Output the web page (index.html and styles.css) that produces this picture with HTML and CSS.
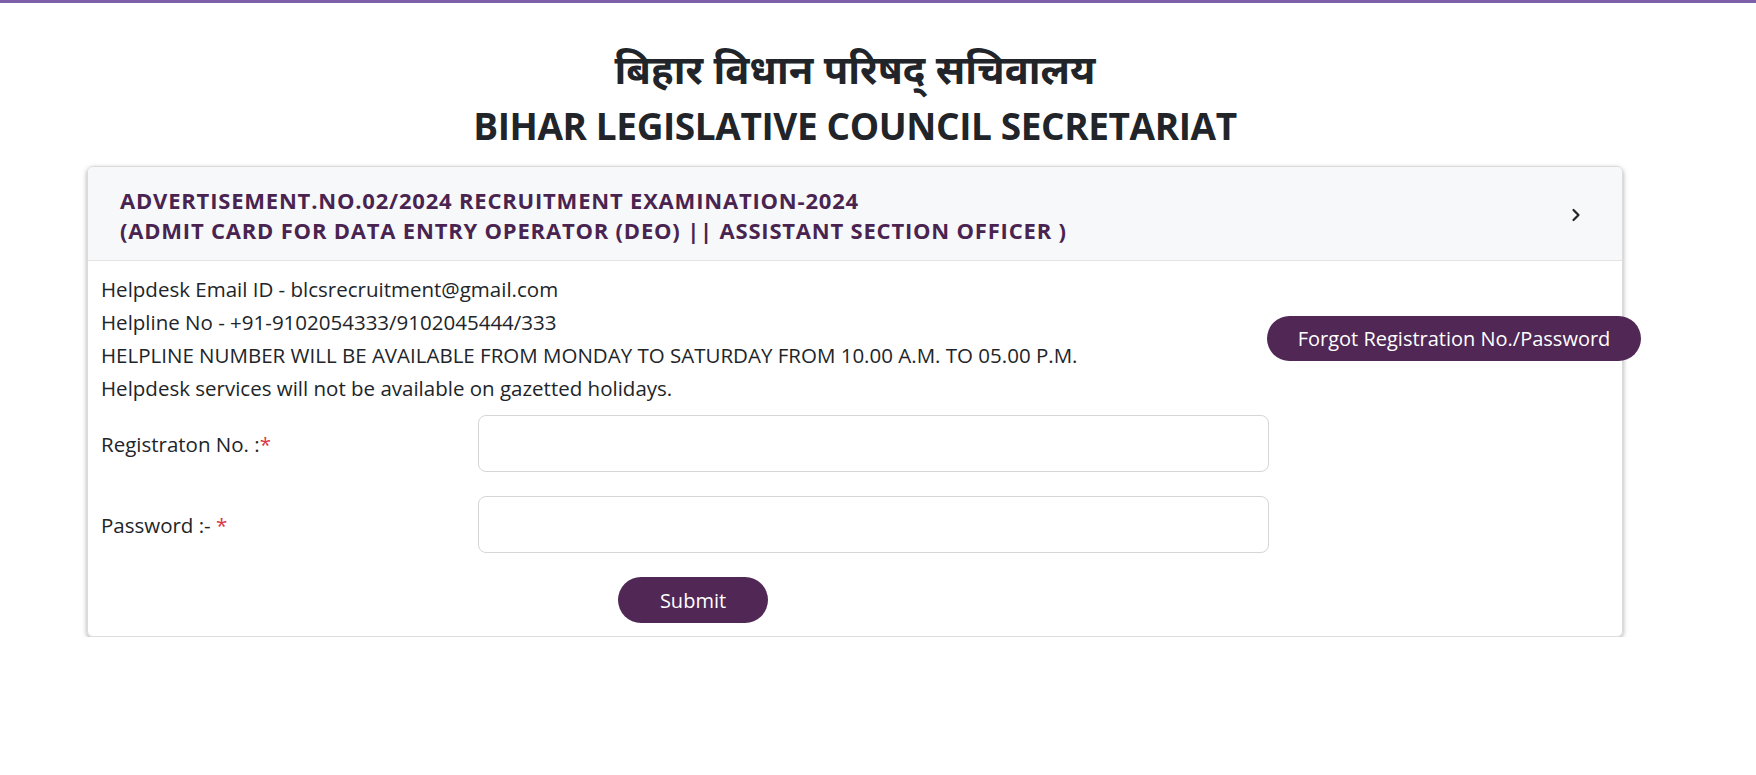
FILE: index.html
```html
<!DOCTYPE html>
<html lang="en">
<head>
    <meta charset="UTF-8">
    <meta name="viewport" content="width=device-width, initial-scale=1.0">
    <title>Bihar Legislative Council Secretariat - Admit Card</title>
    <link rel="stylesheet" href="styles.css">
</head>
<body>

    <div class="top-bar"></div>

    <div class="container">
        <div class="page-title">
            <h1 class="title-hi">बिहार विधान परिषद् सचिवालय</h1>
            <h2 class="title-en">BIHAR LEGISLATIVE COUNCIL SECRETARIAT</h2>
        </div>

        <div class="card">
            <div class="card-header">
                <div class="card-title">
                    ADVERTISEMENT.NO.02/2024 RECRUITMENT EXAMINATION-2024<br>
                    (ADMIT CARD FOR DATA ENTRY OPERATOR (DEO) || ASSISTANT SECTION OFFICER )
                </div>
                <svg class="chevron" width="10" height="14" viewBox="0 0 10 14">
                    <path d="M2.5 2 L7.5 7 L2.5 12" fill="none" stroke="#212529" stroke-width="2.2" stroke-linecap="round" stroke-linejoin="round"/>
                </svg>
            </div>

            <div class="card-body">
                <div class="main-col">
                    <div class="info">
                        <div>Helpdesk Email ID - blcsrecruitment@gmail.com</div>
                        <div>Helpline No - +91-9102054333/9102045444/333</div>
                        <div>HELPLINE NUMBER WILL BE AVAILABLE FROM MONDAY TO SATURDAY FROM 10.00 A.M. TO 05.00 P.M.</div>
                        <div>Helpdesk services will not be available on gazetted holidays.</div>
                    </div>

                    <form class="login-form" onsubmit="return false;">
                        <div class="form-row">
                            <label for="reg-no">Registraton No. :<span class="req">*</span></label>
                            <input type="text" id="reg-no" class="form-input">
                        </div>
                        <div class="form-row">
                            <label for="password">Password :- <span class="req">*</span></label>
                            <input type="password" id="password" class="form-input">
                        </div>
                        <div class="submit-row">
                            <button type="submit" class="btn btn-submit">Submit</button>
                        </div>
                    </form>
                </div>

                <div class="side-col">
                    <button class="btn btn-forgot">Forgot Registration No./Password</button>
                </div>
            </div>
        </div>
    </div>

</body>
</html>
```

FILE: styles.css
```css
body {
    margin: 0;
    font-family: "Open Sans", "Noto Sans", sans-serif;
    font-size: 20.5px;
    color: #212529;
    background-color: #fff;
}

.top-bar {
    height: 3px;
    background-color: #7d60a8;
}

.container {
    width: 1536px;
    margin-left: 87px;
}

.page-title {
    text-align: center;
    padding-top: 38px;
}

.title-hi {
    margin: 0;
    font-size: 40px;
    line-height: 56px;
    font-weight: 700;
}

.title-en {
    margin: 5px 0 0;
    font-size: 37px;
    line-height: 48px;
    font-weight: 700;
    letter-spacing: -0.4px;
}

.card {
    margin-top: 16px;
    border: 1px solid #dcdcdc;
    border-radius: 6px;
    box-shadow: 0 2px 5px rgba(0, 0, 0, 0.35);
}

.card-header {
    display: flex;
    align-items: center;
    justify-content: space-between;
    padding: 18px 41px 15px 32px;
    background-color: #f7f8fa;
    border-bottom: 1px solid #e4e4e4;
    border-radius: 6px 6px 0 0;
}

.card-title {
    font-size: 22px;
    line-height: 30px;
    font-weight: 700;
    letter-spacing: 0.8px;
    color: #4a2450;
}

.chevron {
    display: block;
}

.card-body {
    display: flex;
    padding: 12px 0 13px 13px;
}

.main-col {
    flex: none;
    width: 1168px;
}

.info div {
    line-height: 33px;
}

.login-form {
    margin-top: 10px;
}

.form-row {
    display: flex;
    align-items: center;
    margin-bottom: 24px;
}

.form-row label {
    width: 377px;
    flex: none;
}

.req {
    color: #dc3545;
}

.form-input {
    flex: 1;
    height: 57px;
    box-sizing: border-box;
    border: 1px solid #d6d6d6;
    border-radius: 8px;
    font-size: 20px;
    padding: 0 14px;
}

.submit-row {
    margin-top: 4px;
    padding-left: 517px;
}

.btn {
    font-family: "Open Sans", "Noto Sans", sans-serif;
    font-size: 20px;
    color: #fff;
    background-color: #502755;
    border: none;
    border-radius: 23px;
    cursor: pointer;
}

.btn:hover {
    background-color: #5e2f64;
}

.btn-submit {
    width: 150px;
    height: 46px;
}

.side-col {
    flex: none;
}

.btn-forgot {
    margin-top: 43px;
    margin-left: -2px;
    width: 374px;
    height: 45px;
}
```
